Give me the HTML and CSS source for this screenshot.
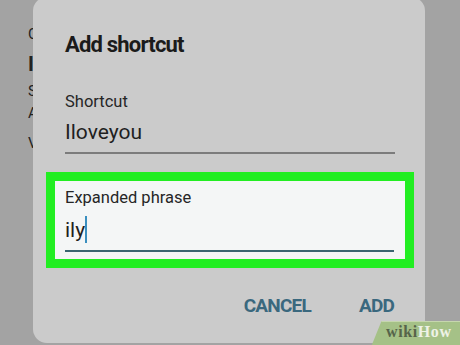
FILE: index.html
```html
<!DOCTYPE html>
<html>
<head>
<meta charset="utf-8">
<link rel="stylesheet" href="styles.css">
</head>
<body>
<div class="stage">
  <div class="backdrop">
    <div class="bg-line bg-c">C</div>
    <div class="bg-line bg-i">I</div>
    <div class="bg-line bg-s">S</div>
    <div class="bg-line bg-a">A</div>
    <div class="bg-line bg-v">V</div>
  </div>
  <div class="dialog">
    <div class="title">Add shortcut</div>
    <div class="field plain">
      <div class="label">Shortcut</div>
      <div class="value">Iloveyou</div>
    </div>
    <div class="highlight">
      <div class="field active">
        <div class="label">Expanded phrase</div>
        <div class="value">ily<span class="cursor"></span></div>
      </div>
    </div>
    <div class="actions">
      <span class="btn">CANCEL</span>
      <span class="btn">ADD</span>
    </div>
  </div>
  <div class="wm"><span class="wm-wiki">wiki</span><span class="wm-how">How</span></div>
</div>
</body>
</html>
```
FILE: styles.css
```css
html, body {
  margin: 0;
  padding: 0;
}
body {
  font-family: Roboto, "Liberation Sans", sans-serif;
  background: #a3a3a3;
}
.stage {
  position: relative;
  width: 460px;
  height: 345px;
  overflow: hidden;
  background: #a3a3a3;
}
.backdrop {
  width: 33px;
  box-sizing: border-box;
  overflow: hidden;
  padding: 26px 0 0 28px;
  display: flex;
  flex-direction: column;
  color: #222;
  font-size: 15px;
  line-height: 16px;
}
.bg-i { margin-top: 12px; font-weight: bold; font-size: 20px; line-height: 20px; }
.bg-s { margin-top: 9px; }
.bg-a { margin-top: 6px; }
.bg-v { margin-top: 14px; }
.dialog {
  position: absolute;
  left: 33px;
  top: -3px;
  width: 392px;
  height: 346px;
  box-sizing: border-box;
  background: #cbcbcb;
  border-radius: 14px;
  padding: 0 11px 0 13px;
  display: flex;
  flex-direction: column;
}
.title {
  margin-top: 34.5px;
  padding-left: 19px;
  font-size: 22px;
  font-weight: bold;
  color: #1b1b1b;
  letter-spacing: -0.8px;
  line-height: 26px;
}
.field .label {
  font-size: 16.5px;
  line-height: 20px;
  color: #262626;
}
.field .value {
  font-size: 21px;
  line-height: 24px;
  color: #1f1f1f;
  display: flex;
  align-items: center;
}
.plain {
  margin: 34px 19px 0 19px;
  padding-bottom: 8px;
  border-bottom: 2px solid #7c7c7c;
}
.plain .value { margin-top: 8px; }
.highlight {
  margin-top: 18px;
  border: 9px solid #22ee22;
  background: #f4f6f6;
  padding: 7px 11px 7px 10px;
}
.active {
  padding-bottom: 7px;
  border-bottom: 2px solid #3b6570;
}
.active .value { margin-top: 10px; }
.cursor {
  display: inline-block;
  width: 2px;
  height: 27px;
  margin-top: -2px;
  background: #3a8fbf;
}
.actions {
  margin-top: 27px;
  display: flex;
  justify-content: flex-end;
  gap: 48px;
  padding-right: 20px;
}
.btn {
  font-size: 19px;
  line-height: 22px;
  font-weight: bold;
  color: #3a687e;
  letter-spacing: -0.8px;
}
.wm {
  position: absolute;
  left: 371px;
  top: 321px;
  width: 100px;
  height: 26px;
  box-sizing: border-box;
  padding-left: 15px;
  font-family: "Liberation Serif", "DejaVu Serif", serif;
  font-weight: bold;
  font-size: 16px;
  letter-spacing: 0.6px;
  line-height: 22px;
}
.wm::before {
  content: "";
  position: absolute;
  left: 0;
  top: 0;
  right: 0;
  bottom: 0;
  background: #a5c187;
  border-top: 1px solid #c6d7ae;
  transform: skewX(-22deg);
  transform-origin: bottom left;
  z-index: 0;
}
.wm span { position: relative; z-index: 1; }
.wm-wiki { color: #56644a; }
.wm-how { color: #eef2e6; }
```
